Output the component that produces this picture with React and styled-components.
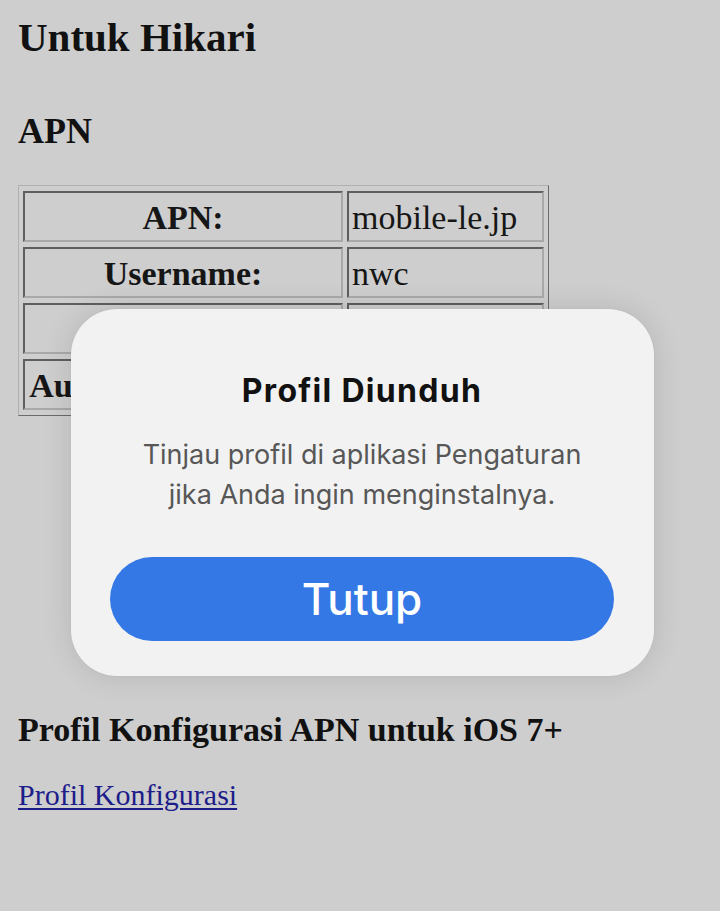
import React from "react";
import styled, { createGlobalStyle } from "styled-components";

const Global = createGlobalStyle`
  html, body { margin: 0; padding: 0; background: #cecece; }
  body { font-family: "Liberation Serif", "Times New Roman", serif; color: #111; }
  #root { min-height: 911px; }
`;

const Page = styled.div`
  position: relative;
  min-height: 911px;
  padding: 14px 18px 0;
  box-sizing: border-box;
  background: #cecece;
`;

const Title = styled.h1`
  margin: 0;
  font-size: 41px;
  line-height: 46px;
  font-weight: bold;
  color: #111;
`;

const Heading = styled.h2`
  margin: ${(p) => p.$top}px 0 0;
  font-size: ${(p) => p.$size}px;
  line-height: 40px;
  font-weight: bold;
  color: #111;
`;

const Table = styled.table`
  margin-top: 34px;
  border-collapse: separate;
  border-spacing: 4px 5px;
  border-style: solid;
  border-width: 1px;
  border-color: #b0b0b2 #6a6a6c #6a6a6c #b0b0b2;
  table-layout: fixed;
  width: 531px;
`;

const Cell = styled.td`
  box-sizing: border-box;
  height: 51px;
  width: ${(p) => p.$w}px;
  padding: 6px 1px 0 ${(p) => (p.$head ? 1 : 3)}px;
  vertical-align: top;
  border-style: solid;
  border-width: 2px;
  border-color: #5e5e60 #a9a9ab #a9a9ab #5e5e60;
  font-size: 34px;
  line-height: 38px;
  font-weight: ${(p) => (p.$head ? "bold" : "normal")};
  text-align: ${(p) => (p.$head ? "center" : "left")};
  white-space: nowrap;
  overflow: hidden;
  color: #161616;
`;

const LinkText = styled.a`
  display: block;
  margin-top: 27px;
  font-size: 30px;
  line-height: 36px;
  color: #1d1d8a;
  text-decoration: underline;
  text-decoration-thickness: 1.5px;
  text-underline-offset: 3px;
  width: max-content;
`;

const Dialog = styled.div`
  position: absolute;
  left: 71px;
  top: 309px;
  width: 583px;
  height: 367px;
  box-sizing: border-box;
  padding: 63px 40px 35px 39px;
  border-radius: 46px;
  background: #f2f2f2;
  box-shadow: 0 0 30px rgba(0, 0, 0, 0.12), 0 0 2px rgba(0, 0, 0, 0.06);
  display: flex;
  flex-direction: column;
  align-items: stretch;
  font-family: Inter, "Noto Sans", sans-serif;
`;

const DialogTitle = styled.div`
  font-size: 32px;
  line-height: 38px;
  font-weight: 700;
  text-align: center;
  color: #111;
  letter-spacing: 1.3px;
`;

const DialogBody = styled.div`
  margin-top: 25px;
  font-size: 27px;
  line-height: 40px;
  text-align: center;
  color: #575757;
`;

const Button = styled.button`
  margin-top: 42px;
  height: 84px;
  flex-shrink: 0;
  border: none;
  border-radius: 42px;
  background: #3478e6;
  color: #fff;
  font-family: Inter, "Noto Sans", sans-serif;
  font-size: 44px;
  font-weight: 500;
  display: flex;
  align-items: center;
  justify-content: center;
  cursor: pointer;
`;

const rows = [
  ["APN:", "mobile-le.jp"],
  ["Username:", "nwc"],
  ["Password:", "nwc"],
  ["Authentication Type:", "PAP atau CHAP"],
];

export default function App() {
  return (
    <>
      <Global />
      <Page>
        <Title>Untuk Hikari</Title>
        <Heading $top={51} $size={36}>APN</Heading>
        <Table>
          <tbody>
            {rows.map(([k, v]) => (
              <tr key={k}>
                <Cell $head $w={320}>{k}</Cell>
                <Cell $w={197}>{v}</Cell>
              </tr>
            ))}
          </tbody>
        </Table>
        <Heading $top={294} $size={34}>Profil Konfigurasi APN untuk iOS 7+</Heading>
        <LinkText href="#">Profil Konfigurasi</LinkText>
        <Dialog role="dialog">
          <DialogTitle>Profil Diunduh</DialogTitle>
          <DialogBody>
            Tinjau profil di aplikasi Pengaturan
            <br />
            jika Anda ingin menginstalnya.
          </DialogBody>
          <Button>Tutup</Button>
        </Dialog>
      </Page>
    </>
  );
}
